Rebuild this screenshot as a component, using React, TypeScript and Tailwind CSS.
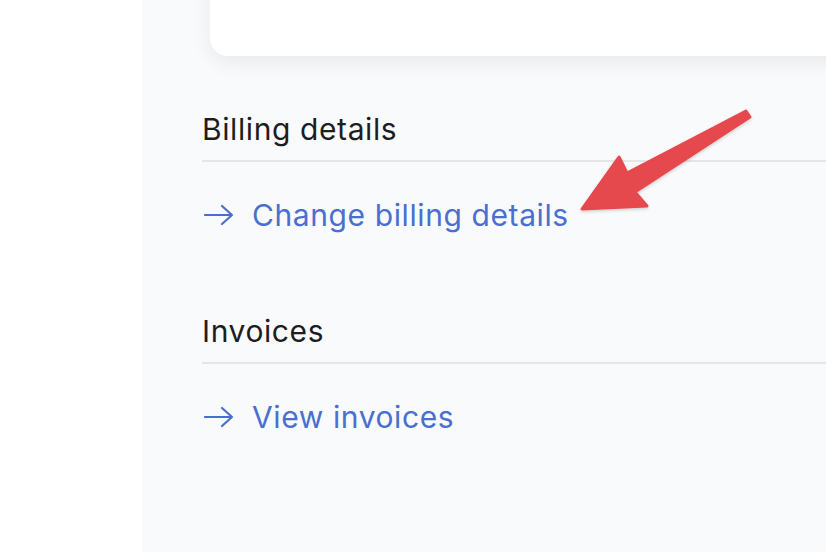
import React from 'react';

const ArrowRight: React.FC = () => (
  <svg width="32" height="22" viewBox="0 0 32 22" fill="none" className="shrink-0">
    <path d="M3 11H30M20 2l10 9-10 9" stroke="currentColor" strokeWidth="2.2" strokeLinecap="round" strokeLinejoin="round" />
  </svg>
);

type SectionProps = {
  title: string;
  link: string;
};

const Section: React.FC<SectionProps> = ({ title, link }) => (
  <div>
    <h2 className="text-[30px] leading-[36px] tracking-[0.6px] text-[#1d1d1f] pb-[13px] border-b-2 border-[#e5e6e8]">{title}</h2>
    <a href="#" className="mt-[35px] flex items-center gap-[18px] text-[#4a6fd1] text-[30px] leading-[36px] tracking-[0.6px]">
      <ArrowRight />
      <span>{link}</span>
    </a>
  </div>
);

const App: React.FC = () => {
  return (
    <div className="relative w-[826px] h-[552px] overflow-hidden bg-white flex" style={{ fontFamily: 'Inter, "Noto Sans", sans-serif' }}>
      <div className="w-[142px] shrink-0" />
      <div className="flex-1 bg-[#f9fafb] pl-[60px]">
        {/* Card above, cut off by the viewport */}
        <div className="-mt-[100px] ml-[8px] -mr-[40px] h-[156px] bg-white rounded-[18px] shadow-[0_6px_20px_rgba(0,0,0,0.07)]" />

        <div className="mt-[55px] flex flex-col gap-[80px]">
          <Section title="Billing details" link="Change billing details" />
          <Section title="Invoices" link="View invoices" />
        </div>
      </div>

      {/* Annotation arrow */}
      <svg className="absolute inset-0 pointer-events-none" width="826" height="552" viewBox="0 0 826 552">
        <defs>
          <filter id="sh" x="-20%" y="-20%" width="140%" height="140%">
            <feDropShadow dx="0" dy="1.5" stdDeviation="1.5" floodColor="#000" floodOpacity="0.18" />
          </filter>
        </defs>
        <polygon
          points="582,209 619,157 627,173 746,111 750,117 635,192 647,206"
          fill="#e5484d"
          stroke="#e5484d"
          strokeWidth="3"
          strokeLinejoin="round"
          filter="url(#sh)"
        />
      </svg>
    </div>
  );
};

export default App;
